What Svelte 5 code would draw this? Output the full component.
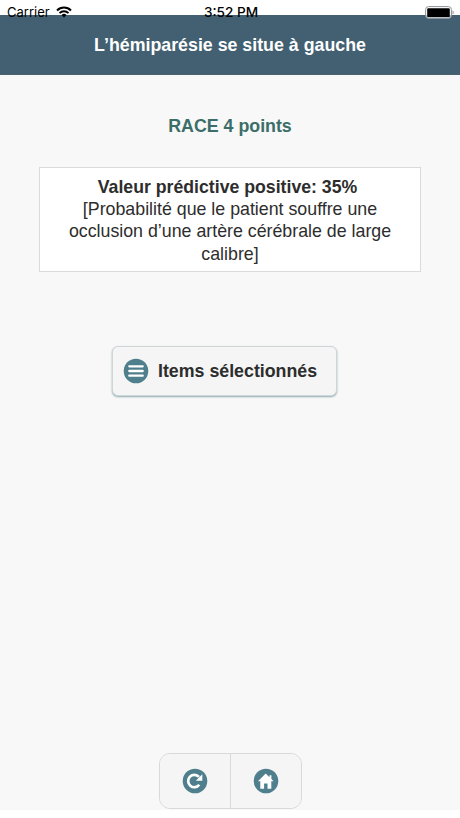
<script>
  const title = 'L’hémiparésie se situe à gauche';
  const score = 4;
  const ppv = 35;
</script>

<div class="screen">
  <div class="status">
    <div class="carrier">
      <span>Carrier</span>
      <svg width="16" height="12" viewBox="0 0 16 12" aria-hidden="true">
        <g fill="none" stroke="#000" stroke-width="2">
          <path d="M1 4.5a9.8 9.8 0 0 1 14 0" />
          <path d="M3.5 7.1a6.3 6.3 0 0 1 9 0" />
        </g>
        <path d="M5.5 9a3.6 3.6 0 0 1 5 0L8 11.6z" />
      </svg>
    </div>
    <span class="time">3:52 PM</span>
    <svg class="battery" width="30" height="13" viewBox="0 0 30 13" aria-hidden="true">
      <rect x="0.6" y="0.6" width="25.8" height="11.8" rx="3" fill="#fff" fill-opacity=".65" stroke="#8b9195" />
      <rect x="2.2" y="2.2" width="22.6" height="8.9" rx="1.2" />
      <path d="M27.5 4.5c1.7.6 1.7 3.4 0 4z" fill="#8b9195" />
    </svg>
  </div>
  <header><h1>{title}</h1></header>
  <main>
    <h2>RACE {score} points</h2>
    <section>
      <b>Valeur prédictive positive: {ppv}%</b>
      <p>[Probabilité que le patient souffre une<br />occlusion d’une artère cérébrale de large<br />calibre]</p>
    </section>
    <button class="items">
      <svg width="26" height="26" viewBox="0 0 26 26" aria-hidden="true">
        <circle cx="13" cy="13" r="12.3" fill="#4f7f8d" />
        <path d="M6.3 8.3h13.4M6.3 13h13.4M6.3 17.7h13.4" stroke="#fff" stroke-width="2.3" stroke-linecap="round" />
      </svg>
      <span>Items sélectionnés</span>
    </button>
  </main>
  <nav>
    <button aria-label="Recommencer">
      <svg width="26" height="26" viewBox="0 0 26 26">
        <circle cx="13" cy="13" r="12.3" fill="#4f7f8d" />
        <path d="M17 8.9A6.2 6.2 0 1 0 17.3 16.8" fill="none" stroke="#fff" stroke-width="2.7" />
        <path d="M20.3 6.2v6.5h-6.5z" fill="#fff" />
      </svg>
    </button>
    <button aria-label="Accueil">
      <svg width="26" height="26" viewBox="0 0 26 26">
        <circle cx="13" cy="13" r="12.3" fill="#4f7f8d" />
        <path d="M12.7 5.4L5 13.3h2.3v7.4h3.8v-5.2h3.4v5.2h3.8v-7.4h2.3l-2.2-2.3V7.2h-1.9v2z" fill="#fff" />
      </svg>
    </button>
  </nav>
</div>

<style>
  :global(body) { margin: 0; background: #fff; }
  .screen {
    position: relative;
    display: flex;
    flex-direction: column;
    box-sizing: border-box;
    width: 460px;
    height: 818px;
    padding-top: 15px;
    overflow: hidden;
    background: #fff;
    color: #2d2d2d;
    font-family: "Liberation Sans", Arial, sans-serif;
    font-size: 17.8px;
    line-height: 22.2px;
  }
  .status {
    position: absolute;
    top: 0;
    left: 0;
    display: grid;
    grid-template-columns: 1fr auto 1fr;
    align-items: center;
    box-sizing: border-box;
    width: 460px;
    height: 24px;
    padding: 0 5px 0 7px;
    color: #000;
    font-family: Inter, sans-serif;
    font-size: 13.3px;
  }
  .carrier { display: flex; align-items: center; gap: 6px; font-size: 13px; }
  .time { font-size: 13.6px; font-weight: 500; }
  .battery { justify-self: end; }
  header {
    flex: none;
    display: flex;
    align-items: center;
    justify-content: center;
    box-sizing: border-box;
    height: 60px;
    padding-top: 1px;
    border-bottom: 1px solid #4b626d;
    background: #426071;
    color: #fff;
  }
  h1, h2 { margin: 0; font-size: 17.8px; line-height: 22px; font-weight: 700; }
  main {
    flex: none;
    display: flex;
    flex-direction: column;
    align-items: center;
    height: 735px;
    background: #f8f8f8;
  }
  h2 { margin-top: 40px; color: #3b6e68; }
  section {
    box-sizing: border-box;
    width: 382px;
    height: 105px;
    margin-top: 30px;
    padding-top: 8px;
    border: 1px solid #d9dbdb;
    background: #fff;
    text-align: center;
  }
  b { padding-right: 5px; font-size: 17.7px; }
  p { margin: 0; }
  button {
    margin: 0;
    padding: 0;
    border: 0;
    background: #f5f5f5;
    color: #2d2d2d;
    font: inherit;
  }
  svg { display: block; flex: none; }
  .items {
    display: flex;
    align-items: center;
    gap: 9px;
    box-sizing: border-box;
    width: 225px;
    height: 50px;
    margin: 74px 0 0 -11px;
    padding-left: 10px;
    border: 1px solid #cfd6d8;
    border-radius: 6px;
    box-shadow: 0 1px 2px #8da8b0;
    font-weight: 700;
  }
  .items span { padding-top: 1px; }
  nav {
    position: absolute;
    left: 159px;
    top: 753px;
    display: flex;
    box-sizing: border-box;
    width: 143px;
    height: 56px;
    overflow: hidden;
    border: 1px solid #d9d9d9;
    border-radius: 11px;
  }
  nav button { flex: 1; display: flex; align-items: center; justify-content: center; }
  nav button + button { border-left: 1px solid #d9d9d9; }
</style>
